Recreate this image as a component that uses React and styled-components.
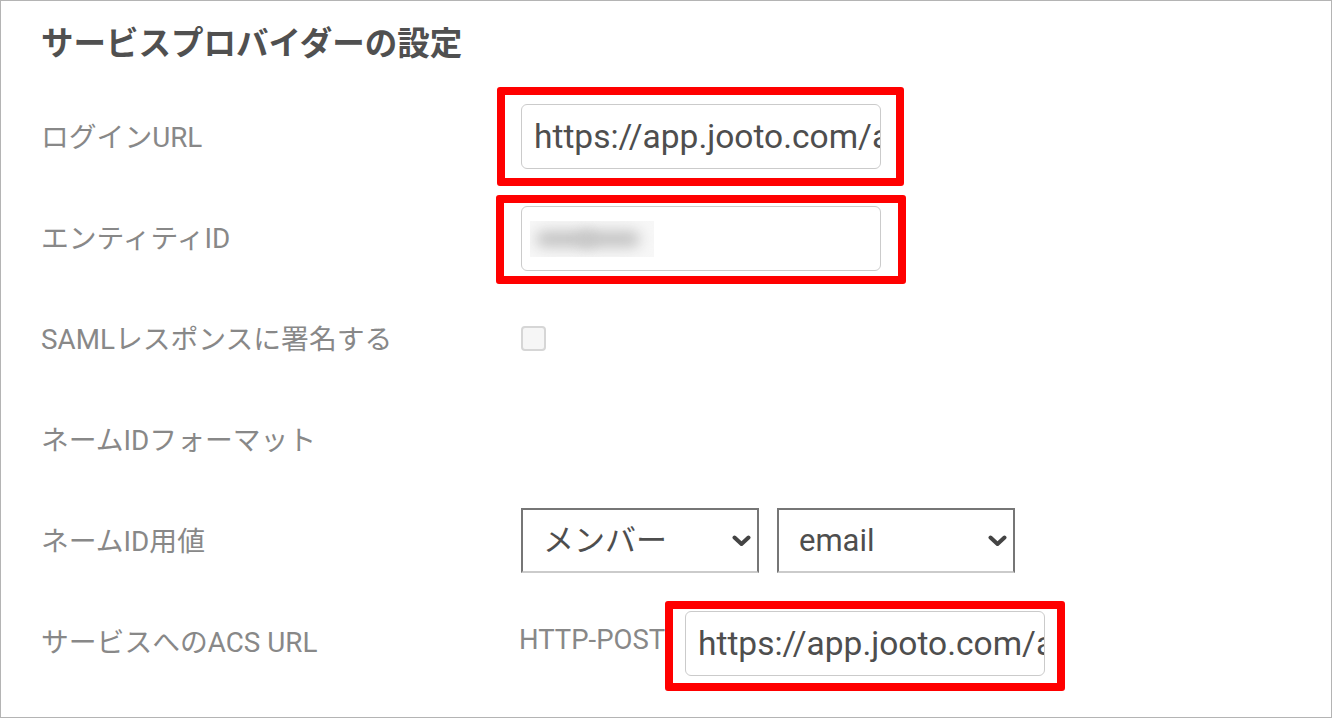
import React from 'react'
import styled, { createGlobalStyle } from 'styled-components'

const GlobalStyle = createGlobalStyle`
  html, body {
    margin: 0;
    padding: 0;
    background: #fff;
  }
  body {
    font-family: Roboto, "Noto Sans CJK JP", "Noto Sans", sans-serif;
  }
`

const Panel = styled.div`
  width: 1332px;
  height: 718px;
  box-sizing: border-box;
  border: 1px solid #b4b4b4;
  padding: 23px 0 0 40px;
  overflow: hidden;
`

const Title = styled.h2`
  margin: 0 0 22px;
  height: 40px;
  line-height: 40px;
  font-size: 32.5px;
  font-weight: 700;
  color: #505050;
`

const Row = styled.div`
  display: grid;
  grid-template-columns: 480px 1fr;
  align-items: center;
  height: 101px;
`

const Label = styled.div`
  padding-bottom: 4px;
  font-size: 27.8px;
  color: #888;
  white-space: nowrap;
`

const Controls = styled.div`
  display: flex;
  align-items: center;
  gap: ${({ gap }) => gap || 0}px;
`

// red frame drawn round the fields that need attention
const Highlight = styled.div`
  box-sizing: border-box;
  display: inline-flex;
  margin-left: ${({ shift }) => shift || 0}px;
  margin-top: ${({ lift }) => lift || 0}px;
  border: 8px solid #ff0000;
  border-radius: 3px;
  padding: ${({ pad }) => pad};
`

const TextField = styled.input`
  box-sizing: border-box;
  width: 360px;
  height: 65px;
  margin: 0;
  padding: 0 0 0 12px;
  border: 1px solid #cbcbcb;
  border-radius: 6px;
  background: #fff;
  font-family: Roboto, "Noto Sans CJK JP", sans-serif;
  font-size: 33.5px;
  color: #4e4e4e;
  outline: none;
`

const FieldBox = styled.div`
  box-sizing: border-box;
  width: 360px;
  height: 65px;
  display: flex;
  align-items: center;
  padding-left: 8px;
  border: 1px solid #cbcbcb;
  border-radius: 6px;
  background: #fff;
`

// masked value: a clipped, blurred smear
const Redacted = styled.div`
  position: relative;
  width: 124px;
  height: 36px;
  background: #f7f7f7;
  overflow: hidden;
`

const Smear = styled.div`
  position: absolute;
  left: ${({ x }) => x}px;
  top: 10px;
  width: ${({ w }) => w}px;
  height: 16px;
  border-radius: 8px;
  background: #c2c2c2;
  filter: blur(7px);
`

const Check = styled.input.attrs({ type: 'checkbox' })`
  appearance: none;
  box-sizing: border-box;
  width: 25px;
  height: 25px;
  margin: 0;
  border: 2px solid #d6d6d6;
  border-radius: 4px;
  background: #f6f6f6;
`

const SelectWrap = styled.div`
  position: relative;
  width: 238px;
  height: 65px;

  svg {
    position: absolute;
    right: 8px;
    top: 27px;
    pointer-events: none;
  }
`

const Select = styled.select`
  appearance: none;
  box-sizing: border-box;
  width: 100%;
  height: 100%;
  margin: 0;
  padding: 0 0 0 20px;
  border: 2px solid #767676;
  border-bottom-color: #cbcbcb;
  border-radius: 0;
  background: #fff;
  font-family: Roboto, "Noto Sans CJK JP", sans-serif;
  font-size: 31px;
  color: #4e4e4e;
  outline: none;
`

const Method = styled.div`
  width: 146px;
  margin-left: -2px;
  padding-bottom: 4px;
  font-size: 27.5px;
  color: #888;
  white-space: nowrap;
`

const Chevron = () => (
  <svg width="19" height="12" viewBox="0 0 19 12">
    <path d="M2.5 2.5 L9.5 9 L16.5 2.5" fill="none" stroke="#444" strokeWidth="4" strokeLinecap="round" strokeLinejoin="round" />
  </svg>
)

const Dropdown = ({ value, options }) => (
  <SelectWrap>
    <Select defaultValue={value}>
      {options.map(o => <option key={o} value={o}>{o}</option>)}
    </Select>
    <Chevron />
  </SelectWrap>
)

const loginUrl = 'https://app.jooto.com/auth/saml/login'
const acsUrl = 'https://app.jooto.com/auth/saml/acs'

export default function App() {
  return (
    <>
      <GlobalStyle />
      <Panel>
        <Title>サービスプロバイダーの設定</Title>

        <Row>
          <Label>ログインURL</Label>
          <Controls>
            <Highlight shift={-24} pad="9px 15px 9px 16px">
              <TextField readOnly defaultValue={loginUrl} />
            </Highlight>
          </Controls>
        </Row>

        <Row>
          <Label>エンティティID</Label>
          <Controls>
            <Highlight shift={-25} lift={4} pad="3px 17px 5px 17px">
              <FieldBox>
                <Redacted>
                  <Smear x={6} w={58} />
                  <Smear x={50} w={60} />
                </Redacted>
              </FieldBox>
            </Highlight>
          </Controls>
        </Row>

        <Row>
          <Label>SAMLレスポンスに署名する</Label>
          <Controls>
            <Check />
          </Controls>
        </Row>

        <Row>
          <Label>ネームIDフォーマット</Label>
          <Controls />
        </Row>

        <Row>
          <Label>ネームID用値</Label>
          <Controls gap={18}>
            <Dropdown value="メンバー" options={['メンバー']} />
            <Dropdown value="email" options={['email', 'id']} />
          </Controls>
        </Row>

        <Row>
          <Label>サービスへのACS URL</Label>
          <Controls>
            <Method>HTTP-POST</Method>
            <Highlight lift={8} pad="2px 12px 7px 12px">
              <TextField readOnly defaultValue={acsUrl} />
            </Highlight>
          </Controls>
        </Row>
      </Panel>
    </>
  )
}
